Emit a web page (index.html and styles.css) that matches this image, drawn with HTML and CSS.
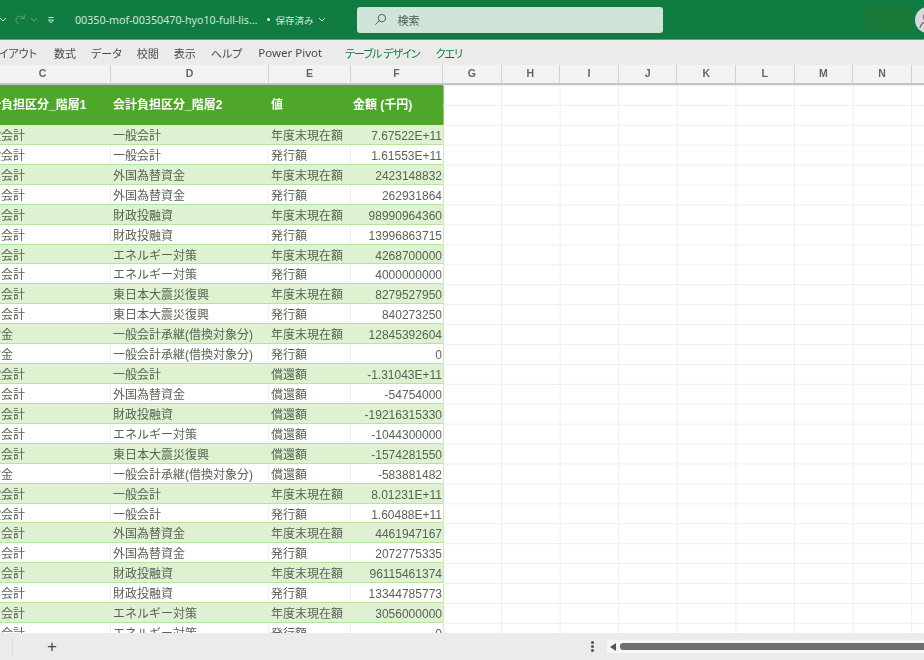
FILE: index.html
```html
<!DOCTYPE html>
<html lang="ja">
<head>
  <meta charset="UTF-8">
  <title>Excel</title>
  <link rel="stylesheet" href="styles.css">
</head>
<body>
<div class="app">

  <!-- Title bar -->
  <header class="titlebar">
    <svg class="qa-chevron first" viewBox="0 0 8 5"><path d="M1 1l3 3 3-3" /></svg>
    <svg class="qa-redo" viewBox="0 0 14 14"><path d="M11 2v4H7M11 6C9 3 5 2.500 3 5c-2 3 0 6 3 7" /></svg>
    <svg class="qa-chevron dim" viewBox="0 0 8 5"><path d="M1 1l3 3 3-3" /></svg>
    <svg class="qa-custom" viewBox="0 0 8 8"><path d="M1.500 1.500h5M1.500 4l2.500 2.800L6.500 4z" /></svg>
    <span class="file-name">00350-mof-00350470-hyo10-full-lis…</span>
    <span class="dot"></span>
    <span class="saved">保存済み</span>
    <svg class="qa-chevron saved-chevron" viewBox="0 0 8 5"><path d="M1 1l3 3 3-3" /></svg>
    <div class="search-box">
      <svg class="search-icon" viewBox="0 0 14 14"><circle cx="8.500" cy="5.500" r="4" /><path d="M5.500 8.500L1.500 12.500" /></svg>
      <span>検索</span>
    </div>
    <div class="title-spacer"></div>
    <div class="hidden-patch"></div>
    <div class="avatar">
      <svg viewBox="0 0 26 26"><circle cx="13" cy="10" r="4.500" /><path d="M5 21c1-5 4-6.500 8-6.500s7 1.500 8 6.500" /></svg>
    </div>
  </header>

  <!-- Ribbon tabs -->
  <nav class="tabs">
    <span class="tab first-tab">レイアウト</span>
    <span class="tab">数式</span>
    <span class="tab">データ</span>
    <span class="tab">校閲</span>
    <span class="tab">表示</span>
    <span class="tab">ヘルプ</span>
    <span class="tab power">Power Pivot</span>
    <span class="tab green">テーブル デザイン</span>
    <span class="tab green">クエリ</span>
  </nav>

  <!-- Column letters -->
  <div class="col-heads">
    <div class="col-head wide-c">C</div>
    <div class="col-head wide-d">D</div>
    <div class="col-head wide-e">E</div>
    <div class="col-head wide-f">F</div>
    <div class="col-head plain">G</div>
    <div class="col-head plain">H</div>
    <div class="col-head plain">I</div>
    <div class="col-head plain">J</div>
    <div class="col-head plain">K</div>
    <div class="col-head plain">L</div>
    <div class="col-head plain">M</div>
    <div class="col-head plain">N</div>
    <div class="col-head plain"></div>
  </div>

  <!-- Sheet -->
  <main class="sheet">
    <div class="data-table">
      <div class="row head"><div>会計負担区分_階層1</div><div>会計負担区分_階層2</div><div>値</div><div>金額 (千円)</div></div>
      <div class="row"><div>一般会計</div><div>一般会計</div><div>年度末現在額</div><div class="num">7.67522E+11</div></div>
      <div class="row"><div>一般会計</div><div>一般会計</div><div>発行額</div><div class="num">1.61553E+11</div></div>
      <div class="row"><div>特別会計</div><div>外国為替資金</div><div>年度末現在額</div><div class="num">2423148832</div></div>
      <div class="row"><div>特別会計</div><div>外国為替資金</div><div>発行額</div><div class="num">262931864</div></div>
      <div class="row"><div>特別会計</div><div>財政投融資</div><div>年度末現在額</div><div class="num">98990964360</div></div>
      <div class="row"><div>特別会計</div><div>財政投融資</div><div>発行額</div><div class="num">13996863715</div></div>
      <div class="row"><div>特別会計</div><div>エネルギー対策</div><div>年度末現在額</div><div class="num">4268700000</div></div>
      <div class="row"><div>特別会計</div><div>エネルギー対策</div><div>発行額</div><div class="num">4000000000</div></div>
      <div class="row"><div>特別会計</div><div>東日本大震災復興</div><div>年度末現在額</div><div class="num">8279527950</div></div>
      <div class="row"><div>特別会計</div><div>東日本大震災復興</div><div>発行額</div><div class="num">840273250</div></div>
      <div class="row"><div>交付金</div><div>一般会計承継(借換対象分)</div><div>年度末現在額</div><div class="num">12845392604</div></div>
      <div class="row"><div>交付金</div><div>一般会計承継(借換対象分)</div><div>発行額</div><div class="num">0</div></div>
      <div class="row"><div>一般会計</div><div>一般会計</div><div>償還額</div><div class="num">-1.31043E+11</div></div>
      <div class="row"><div>特別会計</div><div>外国為替資金</div><div>償還額</div><div class="num">-54754000</div></div>
      <div class="row"><div>特別会計</div><div>財政投融資</div><div>償還額</div><div class="num">-19216315330</div></div>
      <div class="row"><div>特別会計</div><div>エネルギー対策</div><div>償還額</div><div class="num">-1044300000</div></div>
      <div class="row"><div>特別会計</div><div>東日本大震災復興</div><div>償還額</div><div class="num">-1574281550</div></div>
      <div class="row"><div>交付金</div><div>一般会計承継(借換対象分)</div><div>償還額</div><div class="num">-583881482</div></div>
      <div class="row"><div>一般会計</div><div>一般会計</div><div>年度末現在額</div><div class="num">8.01231E+11</div></div>
      <div class="row"><div>一般会計</div><div>一般会計</div><div>発行額</div><div class="num">1.60488E+11</div></div>
      <div class="row"><div>特別会計</div><div>外国為替資金</div><div>年度末現在額</div><div class="num">4461947167</div></div>
      <div class="row"><div>特別会計</div><div>外国為替資金</div><div>発行額</div><div class="num">2072775335</div></div>
      <div class="row"><div>特別会計</div><div>財政投融資</div><div>年度末現在額</div><div class="num">96115461374</div></div>
      <div class="row"><div>特別会計</div><div>財政投融資</div><div>発行額</div><div class="num">13344785773</div></div>
      <div class="row"><div>特別会計</div><div>エネルギー対策</div><div>年度末現在額</div><div class="num">3056000000</div></div>
      <div class="row"><div>特別会計</div><div>エネルギー対策</div><div>発行額</div><div class="num">0</div></div>
    </div>
    <div class="empty-cells"></div>
  </main>

  <!-- Sheet tabs and scrollbar -->
  <footer class="statusbar">
    <span class="sheet-sep"></span>
    <span class="add-sheet">+</span>
    <span class="status-spacer"></span>
    <span class="more-dots"></span>
    <div class="scrollbar">
      <span class="scroll-arrow"></span>
      <span class="scroll-thumb"></span>
    </div>
  </footer>

</div>
</body>
</html>
```

FILE: styles.css
```css
/* General */
body {
  margin: 0;
  font-family: "Liberation Sans", "Noto Sans CJK JP", sans-serif;
  font-size: 12px;
  color: #444;
  background-color: #fff;
  overflow: hidden;
}
.app {
  display: flex;
  flex-direction: column;
  width: 924px;
  height: 660px;
  overflow: hidden;
  filter: blur(0.55px);
}

/* Title bar */
.titlebar {
  display: flex;
  align-items: center;
  flex: none;
  height: 40px;
  background-color: #107c41;
  color: #cfe6d8;
  border-bottom: 1px solid #5da67e;
  box-sizing: border-box;
}
.titlebar svg {
  fill: none;
  flex: none;
}
.qa-chevron {
  width: 8px;
  height: 5px;
  stroke: #cfe6d8;
  stroke-width: 1;
}
.qa-chevron.first {
  margin-left: -1px;
}
.qa-chevron.dim {
  margin-left: 3px;
  stroke: #5da67e;
}
.qa-redo {
  width: 13px;
  height: 13px;
  margin-left: 7px;
  stroke: #5da67e;
  stroke-width: 1;
}
.qa-custom {
  width: 8px;
  height: 8px;
  margin-left: 9px;
  stroke: #cfe6d8;
  stroke-width: 1;
}
.file-name {
  margin-left: 20px;
  font-family: "Noto Sans", "Noto Sans CJK JP", sans-serif;
  font-size: 10.7px;
  white-space: nowrap;
}
.dot {
  width: 3px;
  height: 3px;
  margin-left: 10px;
  border-radius: 50%;
  background-color: #e6f2ea;
  flex: none;
}
.saved {
  margin-left: 5px;
  font-size: 9.500px;
  white-space: nowrap;
}
.saved-chevron {
  margin-left: 5px;
}
.search-box {
  display: flex;
  align-items: center;
  width: 306px;
  height: 26px;
  margin-left: 31px;
  border-radius: 3px;
  background-color: #d0e5da;
  color: #4f6158;
  font-size: 11px;
  flex: none;
}
.search-icon {
  width: 13px;
  height: 13px;
  margin-left: 17px;
  margin-right: 10px;
  stroke: #44574d;
  stroke-width: 1;
}
.title-spacer {
  flex: 1;
}
.hidden-patch {
  width: 46px;
  height: 26px;
  background-color: #1a7a3a;
  flex: none;
}
.avatar {
  width: 26px;
  height: 26px;
  margin-left: 4px;
  margin-right: -17px;
  border-radius: 50%;
  background-color: #d9d9d9;
  flex: none;
}
.avatar svg {
  display: block;
  stroke: #777;
  stroke-width: 1.200;
}

/* Ribbon tabs */
.tabs {
  display: flex;
  align-items: center;
  flex: none;
  height: 25px;
  background-color: #ebebeb;
  white-space: nowrap;
  font-feature-settings: "palt";
}
.tab {
  margin-right: 15px;
  font-size: 11px;
  color: #4a4a4a;
  flex: none;
}
.first-tab {
  margin-left: -11px;
  margin-right: 17px;
}
.power {
  margin-left: 1px;
  margin-right: 23px;
  font-family: "Noto Sans", sans-serif;
  font-size: 11.500px;
}
.tab.green {
  margin-right: 16px;
  letter-spacing: -1px;
  color: #107c41;
}

/* Column letters */
.col-heads {
  display: flex;
  flex: none;
  height: 20px;
  margin-left: -25px;
  background-color: #f3f3f3;
  border-bottom: 2px solid #c4c4c4;
  box-sizing: border-box;
}
.col-head {
  flex: none;
  box-sizing: border-box;
  padding-top: 1px;
  border-right: 1px solid #d2d2d2;
  text-align: center;
  font-size: 10.500px;
  font-weight: bold;
  line-height: 14px;
  color: #666;
}
.wide-c { width: 136px; }
.wide-d { width: 158px; }
.wide-e { width: 82px; }
.wide-f { width: 92px; }
.plain { width: 58.6px; }

/* Sheet */
.sheet {
  display: flex;
  flex: 1;
  min-height: 0;
  margin-left: -25px;
  overflow: hidden;
}
.data-table {
  flex: none;
  width: 468px;
  display: grid;
  grid-auto-rows: 19.93px;
  grid-template-rows: 40px;
  align-content: start;
}
.row {
  display: grid;
  grid-template-columns: 136px 158px 82px 92px;
  box-sizing: border-box;
  border-bottom: 1px solid #b7e3a2;
  border-right: 1px solid #b7e3a2;
  line-height: 18px;
  color: #5a6355;
  white-space: nowrap;
}
.row:nth-child(even) {
  background-color: #dcf2d0;
}
.row > div {
  padding: 2px 0 0 2px;
  overflow: hidden;
  border-right: 1px solid #eef2ec;
  font-size: 12px;
}
.row > div:last-child {
  border-right: none;
}
.row:nth-child(even) > div {
  border-right-color: #dcf2d0;
}
.row > .num {
  padding: 2px 1px 0 0;
  text-align: right;
  font-size: 12px;
}
.row.head {
  background-color: #4ea72a;
  border-color: #4ea72a;
  color: #fff;
  font-weight: bold;
  line-height: 40px;
}
.row.head > div {
  padding-top: 0;
  border: none;
  font-size: 12px;
}
.empty-cells {
  flex: 1;
  background-image:
    linear-gradient(to right, #eeeeee 1px, transparent 1px),
    linear-gradient(to bottom, #eeeeee 1px, transparent 1px);
  background-size: 58.6px 19.93px;
  background-position: 58px 0;
}

/* Status bar */
.statusbar {
  display: flex;
  align-items: center;
  flex: none;
  height: 27px;
  background-color: #ebebeb;
}
.sheet-sep {
  width: 1px;
  height: 16px;
  margin-left: 12px;
  background-color: #dcdcdc;
}
.add-sheet {
  margin-left: 34px;
  font-size: 17px;
  line-height: 17px;
  color: #444;
}
.status-spacer {
  flex: 1;
}
.more-dots {
  width: 3px;
  height: 3px;
  margin-right: 13px;
  border-radius: 50%;
  background-color: #555;
  box-shadow: 0 -4px 0 #555, 0 4px 0 #555;
}
.scrollbar {
  display: flex;
  align-items: center;
  flex: none;
  width: 317px;
  height: 13px;
  background-color: #f6f6f6;
}
.scroll-arrow {
  width: 0;
  height: 0;
  margin-left: 3px;
  border-top: 4px solid transparent;
  border-bottom: 4px solid transparent;
  border-right: 6px solid #555;
}
.scroll-thumb {
  flex: 1;
  height: 7px;
  margin-left: 4px;
  border-radius: 3px 0 0 3px;
  background-color: #6e6e6e;
}
```
